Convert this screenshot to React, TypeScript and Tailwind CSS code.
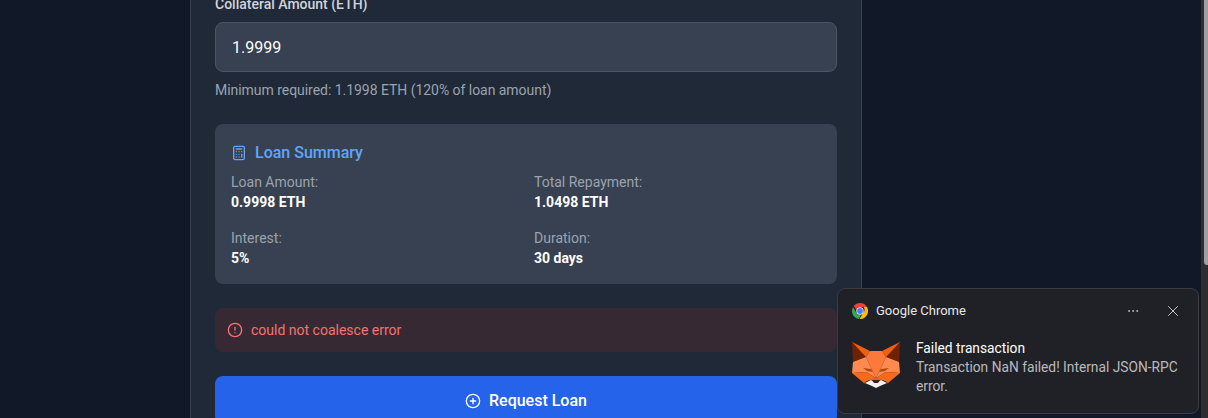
import { Calculator, CircleAlert, CirclePlus, Ellipsis, X } from 'lucide-react'

const summary = [
  { label: 'Loan Amount:', value: '0.9998 ETH' },
  { label: 'Total Repayment:', value: '1.0498 ETH' },
  { label: 'Interest:', value: '5%' },
  { label: 'Duration:', value: '30 days' },
]

function ChromeLogo() {
  return (
    <svg width="16" height="16" viewBox="0 0 48 48">
      <path fill="#ea4335" d="M24 0a24 24 0 0 1 20.8 12H24a12 12 0 0 0-11.3 8L5.2 8.5A24 24 0 0 1 24 0z" />
      <path fill="#34a853" d="M3.2 12l10.4 18a12 12 0 0 0 13.5 5.6L20.5 47.8A24 24 0 0 1 3.2 12z" />
      <path fill="#fbbc04" d="M44.8 12A24 24 0 0 1 22.5 48l10.4-18a12 12 0 0 0 1.5-18z" />
      <circle cx="24" cy="24" r="11" fill="#fff" />
      <circle cx="24" cy="24" r="8.8" fill="#4285f4" />
    </svg>
  )
}

function FoxLogo() {
  return (
    <svg width="48" height="46" viewBox="0 0 48 46" className="mt-[4px] shrink-0">
      {/* ears */}
      <polygon fill="#6e2200" points="0,0 1,20 14,15 7,6" />
      <polygon fill="#6e2200" points="48,0 47,20 34,15 41,6" />
      <polygon fill="#f0600f" points="0,0 18,9 14,15" />
      <polygon fill="#f0600f" points="48,0 30,9 34,15" />
      {/* forehead */}
      <polygon fill="#ff7a3a" points="18,9 30,9 34,15 24,36 14,15" />
      {/* cheeks */}
      <polygon fill="#ff8a50" points="1,20 14,15 24,36 14,30 0,31" />
      <polygon fill="#ff8a50" points="47,20 34,15 24,36 34,30 48,31" />
      <polygon fill="#f76a1c" points="0,31 14,30 24,36 15,39 12,41" />
      <polygon fill="#f76a1c" points="48,31 34,30 24,36 33,39 36,41" />
      <polygon fill="#e4560a" points="0,31 12,41 14,42" />
      <polygon fill="#e4560a" points="48,31 36,41 34,42" />
      {/* eyes */}
      <polygon fill="#b04a12" points="11,26 19,27 21,30 15,29" />
      <polygon fill="#b04a12" points="37,26 29,27 27,30 33,29" />
      {/* muzzle */}
      <polygon fill="#f4f1ee" points="13,41 19,38 24,41 29,38 35,41 28,44 24,46 20,44" />
      <polygon fill="#f76a1c" points="17,38 24,36 31,38 24,38" />
      <polygon fill="#4a1c0a" points="20,38 28,38 26,41 22,41" />
    </svg>
  )
}

export default function App() {
  return (
    <div className="relative flex h-[418px] overflow-hidden bg-[#111827] font-['Roboto',sans-serif] text-white">
      <div className="-mt-[6px] ml-[190px] h-[500px] w-[672px] shrink-0 border-x border-[#374151] bg-[#1f2937] px-6">
        <label className="block text-sm font-medium leading-5 text-[#d1d5db]">Collateral Amount (ETH)</label>
        <div className="mt-2 flex h-[50px] items-center rounded-lg border border-[#4b5563] bg-[#374151] px-4 pt-[2px] text-base">1.9999</div>
        <p className="mt-2 text-sm leading-5 tracking-[-0.04px] text-[#9ca3af]">Minimum required: 1.1998 ETH (120% of loan amount)</p>

        <div className="mt-6 h-[160px] rounded-lg bg-[#374151] p-4">
          <h3 className="flex items-center gap-2 pt-[1px] text-base font-medium leading-6 text-[#60a5fa]">
            <Calculator size={16} />
            Loan Summary
          </h3>
          <div className="mt-[7px] grid grid-cols-2 gap-x-4 gap-y-4 text-sm leading-5">
            {summary.map(item => (
              <div key={item.label}>
                <div className="text-[#9ca3af]">{item.label}</div>
                <div className="font-bold">{item.value}</div>
              </div>
            ))}
          </div>
        </div>

        <div className="mt-6 flex h-11 items-center gap-2 rounded-lg bg-[#372933] px-3 text-sm text-[#f87171]">
          <CircleAlert size={16} />
          could not coalesce error
        </div>

        <button className="mt-6 flex h-12 w-full items-center justify-center gap-2 rounded-lg bg-[#2563eb] pt-[1px] text-base font-medium">
          <CirclePlus size={16} />
          Request Loan
        </button>
      </div>

      {/* Page scrollbar */}
      <div className="absolute inset-y-0 right-0 w-[7px] bg-[#2e2e2e]">
        <div className="ml-[3px] h-[265px] rounded-bl-[3px] bg-[#9f9f9f]" />
      </div>

      {/* Chrome notification */}
      <div className="absolute left-[837px] top-[288px] h-[126px] w-[362px] rounded-lg border border-[#3b3c42] bg-[#202127] pl-[14px] pr-[14px] pt-3">
        <div className="flex h-[20px] items-center gap-2 text-[13px] text-[#e6e6e6]">
          <ChromeLogo />
          <span>Google Chrome</span>
          <Ellipsis size={14} strokeWidth={1} className="ml-auto mr-[16px]" />
          <X size={18} strokeWidth={1.1} className="mr-[2px]" />
        </div>
        <div className="mt-[17px] flex gap-4">
          <FoxLogo />
          <div className="w-[270px] pt-[1px] text-[13.75px] leading-[19px]">
            <div className="text-white">Failed transaction</div>
            <div className="text-[#b9b9bd]">Transaction NaN failed! Internal JSON-RPC error.</div>
          </div>
        </div>
      </div>
    </div>
  )
}
